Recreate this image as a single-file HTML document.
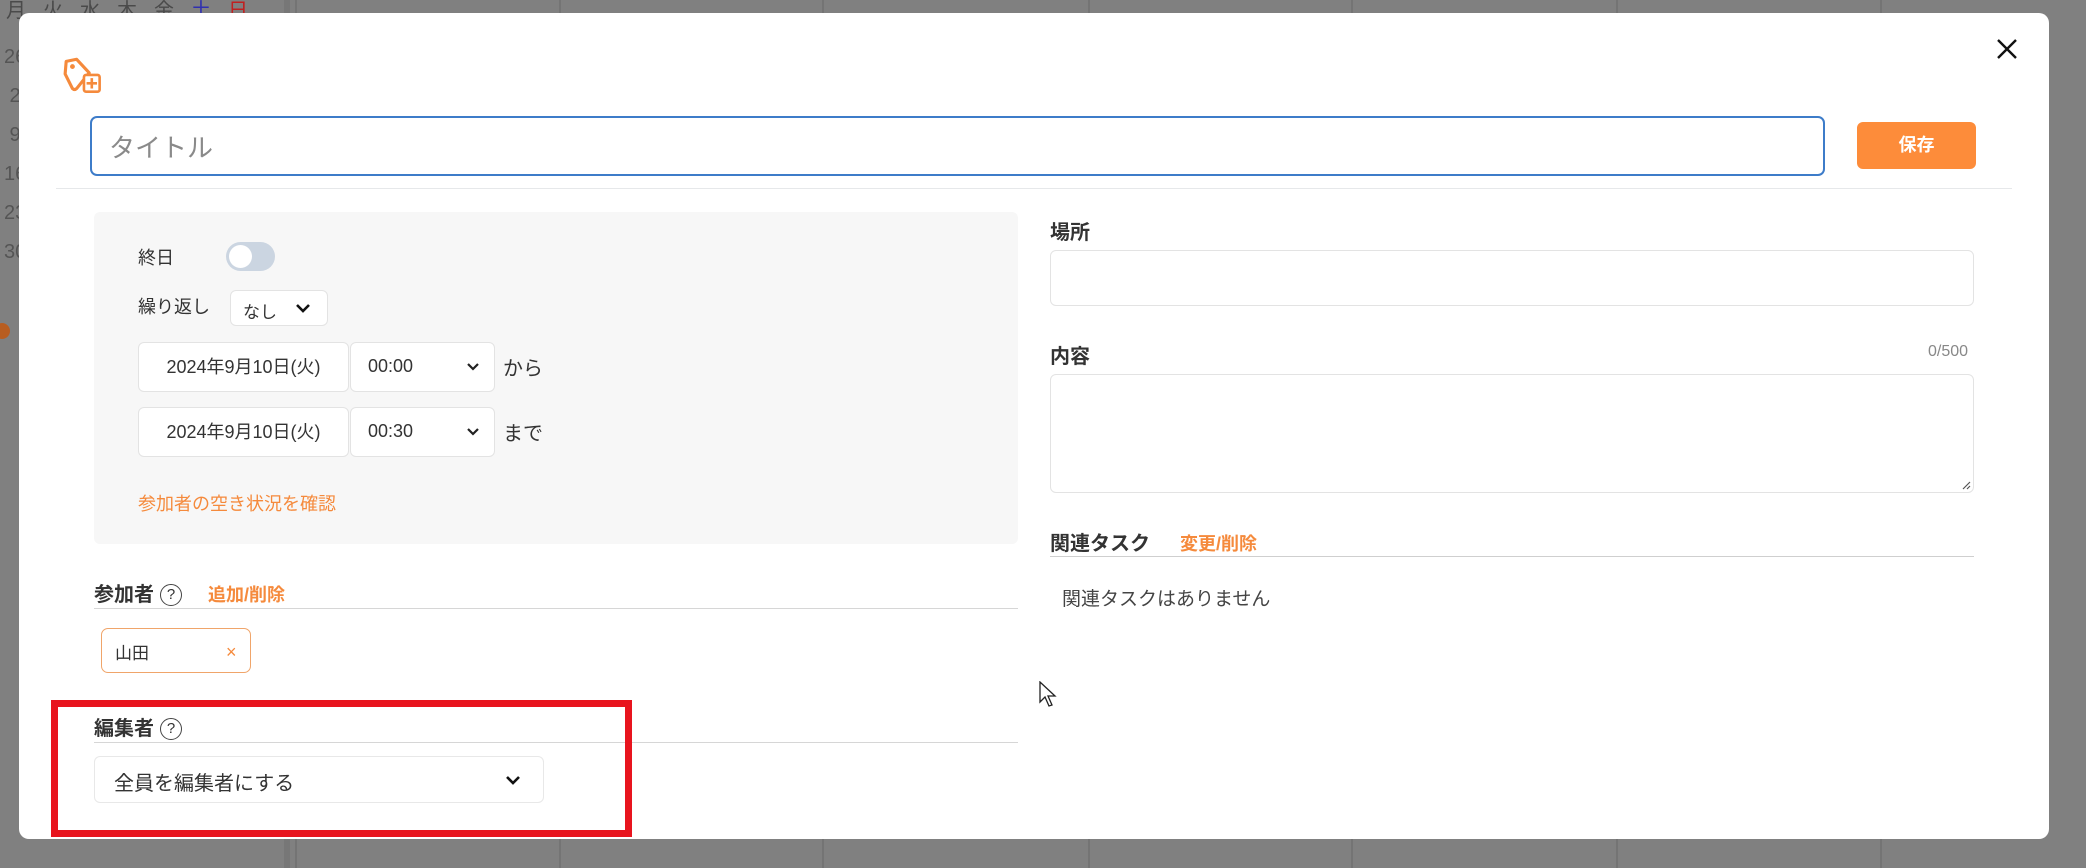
<!DOCTYPE html>
<html><head><meta charset="utf-8"><style>
*{box-sizing:border-box;margin:0;padding:0}
body{width:2086px;height:868px;background:#808080;position:relative;overflow:hidden;font-family:"Liberation Sans","Noto Sans CJK JP",sans-serif;color:#333}
.a{position:absolute}
.bgt{color:#4a4a4a;font-size:20px}
.vl{position:absolute;top:0;width:2px;height:868px;background:#747474}
.modal{position:absolute;left:19px;top:13px;width:2030px;height:826px;background:#fff;border-radius:10px}
.box{position:absolute;background:#fff;border:1px solid #e3e3e3;border-radius:6px}
.lbl{position:absolute;font-size:20px;font-weight:bold;color:#333}
.or{color:#f58a3c}
.q{display:inline-block;width:22px;height:22px;border:1.5px solid #444;border-radius:50%;font-size:15px;text-align:center;line-height:19px;font-weight:normal;vertical-align:2px;margin-left:6px}
.line{position:absolute;height:1px;background:#d6d6d6}
</style></head><body>
<div class="vl" style="left:284px;background:#777;width:6px"></div>
<div class="vl" style="left:295px"></div><div class="vl" style="left:559px"></div><div class="vl" style="left:822px"></div><div class="vl" style="left:1088px"></div><div class="vl" style="left:1351px"></div><div class="vl" style="left:1616px"></div><div class="vl" style="left:1880px"></div>
<div class="a bgt" style="left:6px;top:-6px;letter-spacing:17px">月火水木金<span style="color:#3030b0">土</span><span style="color:#c02020">日</span></div>
<div class="a bgt" style="left:4px;top:38px;line-height:39px;color:#555">26<br>&nbsp;2<br>&nbsp;9<br>16<br>23<br>30</div>
<div class="a" style="left:-6px;top:323px;width:16px;height:16px;border-radius:50%;background:#b85d20"></div>

<div class="modal"></div>
<svg class="a" style="left:62px;top:56px" width="46" height="40" viewBox="0 0 44 38"><path d="M4 5 L14 3 L26 16 L14 31 Q12 33 10 31 L3 17 Z" fill="none" stroke="#f58a3c" stroke-width="3" stroke-linejoin="round"/><circle cx="10" cy="10" r="2.3" fill="#f58a3c"/><rect x="21" y="18" width="15" height="16" rx="2" fill="#fff" stroke="#f58a3c" stroke-width="2.5"/><path d="M28.5 21v10M23.5 26h10" stroke="#f58a3c" stroke-width="2.5"/></svg>
<svg class="a" style="left:1996px;top:38px" width="22" height="22" viewBox="0 0 22 22"><path d="M2 2L20 20M20 2L2 20" stroke="#111" stroke-width="2.4"/></svg>

<div class="a" style="left:90px;top:116px;width:1735px;height:60px;border:2.5px solid #3d7cc9;border-radius:7px"></div>
<div class="a" style="left:109px;top:128px;font-size:26px;color:#8a8a8a">タイトル</div>
<div class="a" style="left:1857px;top:122px;width:119px;height:47px;background:#fd8c3a;border-radius:6px;color:#fff;font-weight:bold;font-size:18px;text-align:center;line-height:47px">保存</div>
<div class="line" style="left:56px;top:188px;width:1956px;background:#e6e8ea"></div>

<div class="a" style="left:94px;top:212px;width:924px;height:332px;background:#f7f7f7;border-radius:6px"></div>
<div class="a" style="left:138px;top:244px;font-size:18px">終日</div>
<div class="a" style="left:226px;top:242px;width:49px;height:29px;border-radius:15px;background:#cbd5e1"><div style="position:absolute;left:3px;top:3px;width:23px;height:23px;border-radius:50%;background:#fff"></div></div>
<div class="a" style="left:138px;top:293px;font-size:18px">繰り返し</div>
<div class="box" style="left:230px;top:290px;width:98px;height:36px;font-size:17px;padding:7px 0 0 12px">なし<svg class="a" style="left:64px;top:11px" width="16" height="12" viewBox="0 0 16 12"><path d="M2 3L8 9L14 3" fill="none" stroke="#111" stroke-width="2.6"/></svg></div>

<div class="box" style="left:138px;top:342px;width:211px;height:50px;font-size:18px;text-align:center;line-height:48px">2024年9月10日(火)</div>
<div class="box" style="left:350px;top:342px;width:145px;height:50px;font-size:18px;padding:13px 0 0 17px">00:00<svg class="a" style="left:115px;top:19px" width="14" height="10" viewBox="0 0 14 10"><path d="M2 2L7 7L12 2" fill="none" stroke="#222" stroke-width="2.2"/></svg></div>
<div class="a" style="left:503px;top:352px;font-size:20px">から</div>
<div class="box" style="left:138px;top:407px;width:211px;height:50px;font-size:18px;text-align:center;line-height:48px">2024年9月10日(火)</div>
<div class="box" style="left:350px;top:407px;width:145px;height:50px;font-size:18px;padding:13px 0 0 17px">00:30<svg class="a" style="left:115px;top:19px" width="14" height="10" viewBox="0 0 14 10"><path d="M2 2L7 7L12 2" fill="none" stroke="#222" stroke-width="2.2"/></svg></div>
<div class="a" style="left:503px;top:417px;font-size:20px">まで</div>
<div class="a or" style="left:138px;top:490px;font-size:18px">参加者の空き状況を確認</div>

<div class="lbl" style="left:94px;top:578px">参加者<span class="q">?</span><span class="or" style="font-size:18px;margin-left:26px">追加/削除</span></div>
<div class="line" style="left:94px;top:608px;width:924px"></div>
<div class="a" style="left:101px;top:628px;width:150px;height:45px;border:1.5px solid #f0a56a;border-radius:7px;font-size:17px;padding:10px 0 0 13px">山田<span class="a or" style="left:124px;top:13px;font-size:18px">×</span></div>

<div class="lbl" style="left:94px;top:712px">編集者<span class="q">?</span></div>
<div class="line" style="left:94px;top:742px;width:924px"></div>
<div class="box" style="left:94px;top:756px;width:450px;height:47px;font-size:20px;padding:10px 0 0 19px;border-color:#e8e8e8">全員を編集者にする<svg class="a" style="left:410px;top:18px" width="16" height="12" viewBox="0 0 16 12"><path d="M2 2L8 8L14 2" fill="none" stroke="#111" stroke-width="2.6"/></svg></div>
<div class="a" style="left:51px;top:700px;width:581px;height:137px;border:7px solid #e8141e"></div>

<div class="lbl" style="left:1050px;top:216px">場所</div>
<div class="box" style="left:1050px;top:250px;width:924px;height:56px"></div>
<div class="lbl" style="left:1050px;top:340px">内容</div>
<div class="a" style="left:1928px;top:343px;font-size:16px;color:#888">0/500</div>
<div class="box" style="left:1050px;top:374px;width:924px;height:119px"><svg class="a" style="right:2px;bottom:2px" width="10" height="10"><path d="M9 2L2 9M9 6L6 9" stroke="#555" stroke-width="1.2"/></svg></div>
<div class="lbl" style="left:1050px;top:527px">関連タスク<span class="or" style="font-size:18px;margin-left:30px">変更/削除</span></div>
<div class="line" style="left:1050px;top:556px;width:924px;background:#cfcfcf"></div>
<div class="a" style="left:1062px;top:584px;font-size:19px;color:#444">関連タスクはありません</div>
<svg class="a" style="left:1039px;top:681px" width="18" height="28" viewBox="0 0 18 28"><path d="M1 1L1 21L6 16L10 25L13 24L9 15L16 15Z" fill="#fff" stroke="#222" stroke-width="1.3"/></svg>
</body></html>
